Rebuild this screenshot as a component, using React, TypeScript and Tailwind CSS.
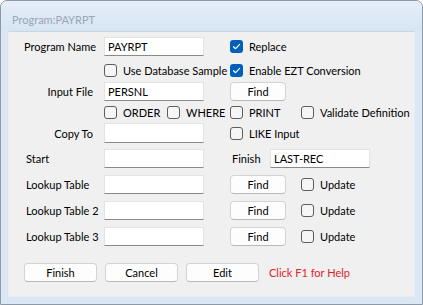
import React from "react";

const font = { fontFamily: '"Lato", "Liberation Sans", sans-serif' };

function Box({ checked }: { checked?: boolean }) {
  if (checked) {
    return (
      <span className="inline-flex h-[13px] w-[13px] shrink-0 items-center justify-center rounded-[3px] bg-[#005fb8]">
        <svg width="9" height="9" viewBox="0 0 9 9" fill="none">
          <path d="M1.5 4.7 L3.6 6.7 L7.6 2.4" stroke="#fff" strokeWidth="1.2" strokeLinecap="round" strokeLinejoin="round" />
        </svg>
      </span>
    );
  }
  return <span className="inline-block h-[13px] w-[13px] shrink-0 rounded-[3px] border border-[#5d5d5d] bg-[#f6f6f6]" />;
}

function Check({ label, checked, className = "" }: { label: string; checked?: boolean; className?: string }) {
  return (
    <label className={`flex items-center gap-[6px] whitespace-nowrap ${className}`}>
      <Box checked={checked} />
      <span>{label}</span>
    </label>
  );
}

function Field({ value = "", className = "" }: { value?: string; className?: string }) {
  return (
    <div className={`flex h-[19px] w-[100px] shrink-0 items-center border border-[#e3e3e3] border-b-[#8a8a8a] bg-white pl-[3px] ${className}`}>
      {value}
    </div>
  );
}

function Btn({ label, className = "" }: { label: string; className?: string }) {
  return (
    <button
      type="button"
      className={`flex h-[19px] shrink-0 items-center justify-center rounded-[4px] border border-[#d3d3d3] border-b-[#b9b9b9] bg-[#fdfdfd] ${className}`}
    >
      {label}
    </button>
  );
}

function Label({ text, right }: { text: string; right?: boolean }) {
  return (
    <div className={`w-[80px] shrink-0 whitespace-nowrap ${right ? "pr-[11px] text-right" : "pl-[2px]"}`}>{text}</div>
  );
}

const lookups = ["Lookup Table", "Lookup Table 2", "Lookup Table 3"];

export default function App() {
  return (
    <div
      className="h-[305px] w-[423px] overflow-hidden rounded-t-[7px] border border-[#8d99a6] bg-[#dbe7f4] text-[11px] leading-none text-black"
      style={font}
    >
      <div className="flex h-[30px] items-center bg-gradient-to-b from-[#e6eef8] to-[#d6e4f3] pl-[11px] pt-[6px] text-[11px] text-[#9aa5b1]">
        Program:PAYRPT
      </div>
      <div className="mx-[7px] h-[266px] border border-[#e9eef4] border-t-[#c9d5e2] bg-[#f0f0f0] pl-[15px] pt-[5px]">
        <div className="flex items-center">
          <Label text="Program Name" right />
          <Field value="PAYRPT" />
          <Check label="Replace" checked className="ml-[26px]" />
        </div>
        <div className="mt-[6px] flex h-[16px] items-center pl-[80px]">
          <Check label="Use Database Sample" className="w-[126px]" />
          <Check label="Enable EZT Conversion" checked />
        </div>
        <div className="mt-[4px] flex items-center">
          <Label text="Input File" right />
          <Field value="PERSNL" />
          <Btn label="Find" className="ml-[26px] w-[56px]" />
        </div>
        <div className="mt-[3px] flex h-[16px] items-center pl-[80px]">
          <Check label="ORDER" className="w-[63px]" />
          <Check label="WHERE" className="w-[63px]" />
          <Check label="PRINT" className="w-[71px]" />
          <Check label="Validate Definition" />
        </div>
        <div className="mt-[3px] flex items-center">
          <Label text="Copy To" right />
          <Field className="h-[20px]" />
          <Check label="LIKE Input" className="ml-[26px]" />
        </div>
        <div className="mt-[6px] flex items-center">
          <Label text="Start" />
          <Field />
          <div className="ml-[28px] w-[38px]">Finish</div>
          <Field value="LAST-REC" />
        </div>
        {lookups.map((t) => (
          <div key={t} className="mt-[7px] flex items-center">
            <Label text={t} />
            <Field />
            <Btn label="Find" className="ml-[26px] w-[56px]" />
            <Check label="Update" className="ml-[15px]" />
          </div>
        ))}
        <div className="mt-[17px] flex items-center gap-[8px]">
          <Btn label="Finish" className="w-[73px]" />
          <Btn label="Cancel" className="w-[73px]" />
          <Btn label="Edit" className="w-[73px]" />
          <span className="ml-[2px] text-[#e0202a]">Click F1 for Help</span>
        </div>
      </div>
    </div>
  );
}
